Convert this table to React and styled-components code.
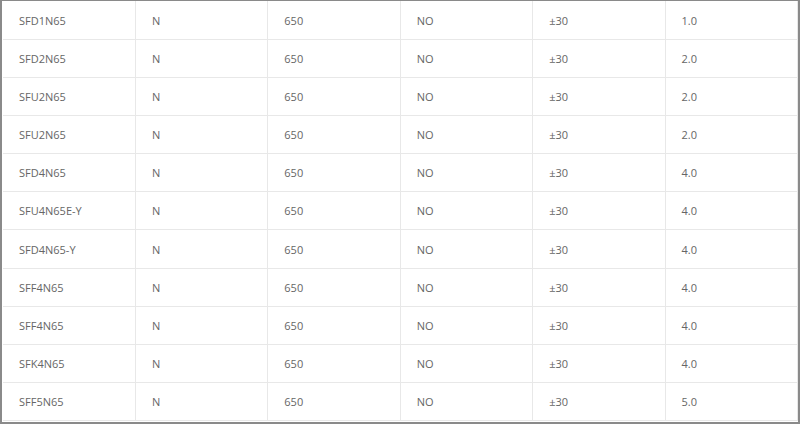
import React from "react";
import styled, { createGlobalStyle } from "styled-components";

const Global = createGlobalStyle`
  html, body { margin: 0; padding: 0; background: #fff; }
`;

const Frame = styled.div`
  box-sizing: border-box;
  width: 800px;
  height: 424px;
  border-style: solid;
  border-color: #8a8a8a;
  border-width: 1px 2px 2px 2px;
  padding: 0 0 1px 1px;
  overflow: hidden;
  background: #fff;
`;

const Table = styled.table`
  width: 100%;
  border-collapse: collapse;
  table-layout: fixed;
  font-family: "Open Sans", "Noto Sans", sans-serif;
  font-size: 11px;
  color: #666;
`;

const Cell = styled.td`
  height: ${p => (p.$first ? "38px" : "37.1px")};
  padding: 0 0 0 16px;
  border: 1px solid #e8e8e8;
  border-top: ${p => (p.$first ? "none" : "1px solid #e8e8e8")};
  border-left: ${p => (p.$edge ? "none" : "1px solid #e8e8e8")};
  text-align: left;
  vertical-align: middle;
  white-space: nowrap;
`;

const rows = [
  ["SFD1N65", "N", "650", "NO", "±30", "1.0"],
  ["SFD2N65", "N", "650", "NO", "±30", "2.0"],
  ["SFU2N65", "N", "650", "NO", "±30", "2.0"],
  ["SFU2N65", "N", "650", "NO", "±30", "2.0"],
  ["SFD4N65", "N", "650", "NO", "±30", "4.0"],
  ["SFU4N65E-Y", "N", "650", "NO", "±30", "4.0"],
  ["SFD4N65-Y", "N", "650", "NO", "±30", "4.0"],
  ["SFF4N65", "N", "650", "NO", "±30", "4.0"],
  ["SFF4N65", "N", "650", "NO", "±30", "4.0"],
  ["SFK4N65", "N", "650", "NO", "±30", "4.0"],
  ["SFF5N65", "N", "650", "NO", "±30", "5.0"],
];

export default function App() {
  return (
    <>
      <Global />
      <Frame>
        <Table>
          <tbody>
            {rows.map((r, i) => (
              <tr key={i}>
                {r.map((c, j) => (
                  <Cell key={j} $first={i === 0} $edge={j === 0}>
                    {c}
                  </Cell>
                ))}
              </tr>
            ))}
          </tbody>
        </Table>
      </Frame>
    </>
  );
}
